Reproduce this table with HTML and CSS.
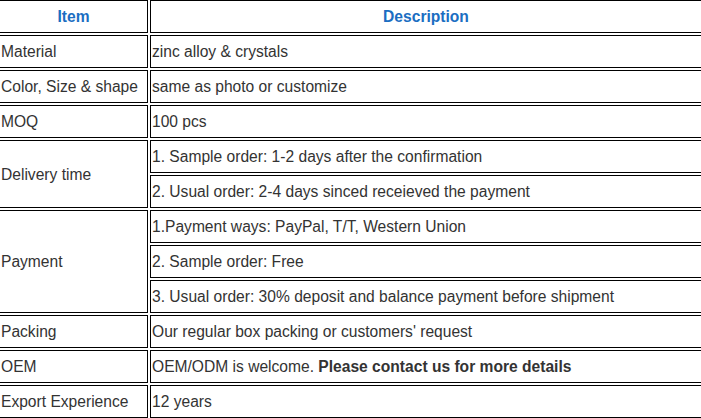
FILE: index.html
```
<!DOCTYPE html>
<html>
<head>
<meta charset="utf-8">
<link rel="stylesheet" href="styles.css">
</head>
<body>
<table class="spec">
  <colgroup>
    <col class="c1">
    <col class="c2">
  </colgroup>
  <tr>
    <th>Item</th>
    <th>Description</th>
  </tr>
  <tr><td>Material</td><td>zinc alloy &amp; crystals</td></tr>
  <tr><td>Color, Size &amp; shape</td><td>same as photo or customize</td></tr>
  <tr><td>MOQ</td><td>100 pcs</td></tr>
  <tr><td rowspan="2">Delivery time</td><td>1. Sample order: 1-2 days after the confirmation</td></tr>
  <tr><td>2. Usual order: 2-4 days sinced receieved the payment</td></tr>
  <tr><td rowspan="3">Payment</td><td>1.Payment ways: PayPal, T/T, Western Union</td></tr>
  <tr><td>2. Sample order: Free</td></tr>
  <tr><td>3. Usual order: 30% deposit and balance payment before shipment</td></tr>
  <tr><td>Packing</td><td>Our regular box packing or customers' request</td></tr>
  <tr><td>OEM</td><td>OEM/ODM is welcome. <strong>Please contact us for more details</strong></td></tr>
  <tr><td>Export Experience</td><td>12 years</td></tr>
</table>
</body>
</html>
```
FILE: styles.css
```
html, body {
  margin: 0;
  padding: 0;
  background: #ffffff;
  overflow: hidden;
}
.spec {
  margin: -2px 0 0 -3px;
  width: 707px;
  table-layout: fixed;
  border-collapse: separate;
  border-spacing: 2px;
  font-family: "Liberation Sans", Arial, sans-serif;
  font-size: 15.6px;
  color: #333333;
}
.spec .c1 { width: 149px; }
.spec .c2 { width: 552px; }
.spec th,
.spec td {
  border: 1px solid #000000;
  padding: 1px;
  line-height: 29px;
  text-align: left;
  vertical-align: middle;
  white-space: nowrap;
  overflow: hidden;
}
.spec th {
  text-align: center;
  font-weight: bold;
  color: #1b6ec2;
}
.spec strong { font-weight: bold; }
```
